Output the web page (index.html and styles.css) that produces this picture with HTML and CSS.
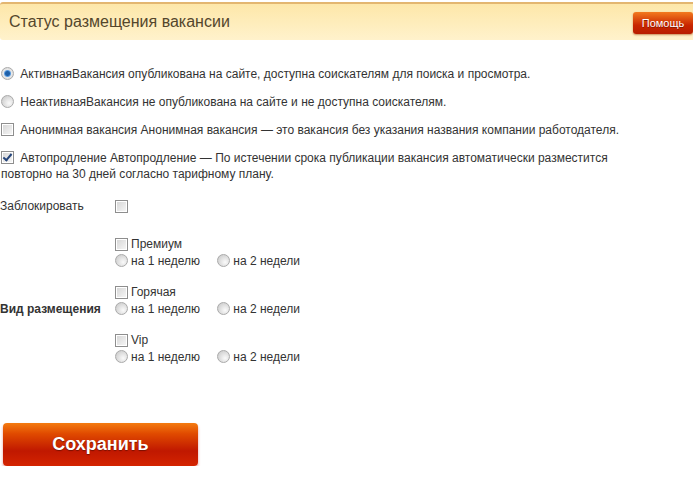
FILE: index.html
```html
<!DOCTYPE html>
<html lang="ru">
<head>
  <meta charset="UTF-8" />
  <title>Статус размещения вакансии</title>
  <link rel="stylesheet" href="styles.css">
</head>
<body>
  <div class="panel-head">
    <h2>Статус размещения вакансии</h2>
    <button class="help">Помощь</button>
  </div>

  <div class="options">
    <label class="opt"><input type="radio" name="status" checked /> АктивнаяВакансия опубликована на сайте, доступна соискателям для поиска и просмотра.</label>
    <label class="opt"><input type="radio" name="status" /> НеактивнаяВакансия не опубликована на сайте и не доступна соискателям.</label>
    <label class="opt"><input type="checkbox" /> Анонимная вакансия Анонимная вакансия — это вакансия без указания названия компании работодателя.</label>
    <label class="opt"><input type="checkbox" checked /> Автопродление Автопродление — По истечении срока публикации вакансия автоматически разместится повторно на 30 дней согласно тарифному плану.</label>
  </div>

  <div class="row">
    <div class="row-label">Заблокировать</div>
    <div class="row-field"><input type="checkbox" /></div>
  </div>

  <div class="row placement">
    <div class="row-label bold">Вид размещения</div>
    <div class="row-field">
      <div class="group">
        <label class="line"><input type="checkbox" />Премиум</label>
        <div class="line">
          <label><input type="radio" name="p1" />на 1 неделю</label>
          <label><input type="radio" name="p1" />на 2 недели</label>
        </div>
      </div>
      <div class="group">
        <label class="line"><input type="checkbox" />Горячая</label>
        <div class="line">
          <label><input type="radio" name="p2" />на 1 неделю</label>
          <label><input type="radio" name="p2" />на 2 недели</label>
        </div>
      </div>
      <div class="group">
        <label class="line"><input type="checkbox" />Vip</label>
        <div class="line">
          <label><input type="radio" name="p3" />на 1 неделю</label>
          <label><input type="radio" name="p3" />на 2 недели</label>
        </div>
      </div>
    </div>
  </div>

  <button class="save">Сохранить</button>
</body>
</html>
```

FILE: styles.css
```css
body {
  margin: 0;
  font-family: "Liberation Sans", Arial, sans-serif;
  font-size: 12px;
  color: #333;
  background: #fff;
}

.panel-head {
  margin-top: 2px;
  height: 36px;
  border-top: 2px solid #e3b670;
  background: linear-gradient(#fde7a9, #fff2cc);
  border-radius: 3px 0 0 3px;
  display: flex;
  align-items: center;
  justify-content: space-between;
  padding-left: 9px;
}

.panel-head h2 {
  margin: 0;
  font-weight: normal;
  font-size: 16px;
  color: #54462c;
}

.help {
  width: 60px;
  height: 22px;
  margin-top: 2px;
  border: 0;
  border-radius: 3px;
  font-family: inherit;
  font-size: 11px;
  color: #fff;
  background: linear-gradient(#f37a1e, #c92600 60%, #b81c00);
  box-shadow: 0 1px 2px #c98c5c;
  text-shadow: 0 1px 0 #8a1a00;
}

input[type=checkbox], input[type=radio] {
  appearance: none;
  -webkit-appearance: none;
  width: 13px;
  height: 13px;
  margin: 0 3px 0 0;
  vertical-align: -2px;
  border: 1px solid #9a9a9a;
  background: linear-gradient(135deg, #d4d4d4, #f8f8f8);
  position: relative;
}

input[type=checkbox] {
  border-color: #8e8e8e;
  box-shadow: inset 0 0 0 1px #fff;
}

input[type=radio] {
  border-radius: 50%;
  border-color: #aaa;
  background: radial-gradient(circle at 65% 65%, #fafafa, #cfcfcf 80%);
}

input[type=radio]:checked {
  background: radial-gradient(circle, #1d5fa8 0 2px, #5a9ce0 3px, #e8e8e8 4px, #cfcfcf);
}

input[type=checkbox]:checked::after {
  content: "";
  position: absolute;
  left: 3px;
  top: 0;
  width: 3px;
  height: 7px;
  border: solid #24447a;
  border-width: 0 2px 2px 0;
  transform: rotate(40deg);
}

.options {
  margin-top: 26px;
  padding-left: 1px;
  max-width: 640px;
}

.opt {
  display: block;
  line-height: 16px;
  margin-bottom: 12px;
}

.row {
  display: flex;
  margin-top: 16px;
  line-height: 17px;
}

.row-label {
  width: 115px;
  flex: none;
}

.row-field input[type=checkbox] {
  vertical-align: -3px;
}

.placement {
  margin-top: 21px;
}

.bold {
  font-weight: bold;
  margin-top: 65px;
}

.group {
  margin-bottom: 14px;
}

.group:last-child {
  margin-bottom: 0;
}

.line {
  display: block;
  height: 17px;
}

.line label {
  margin-right: 14px;
}

.save {
  display: block;
  margin: 57px 0 0 3px;
  width: 195px;
  height: 43px;
  border: 0;
  border-radius: 4px;
  font-family: inherit;
  font-size: 18px;
  font-weight: bold;
  color: #fff;
  background: linear-gradient(#f47b10, #e04a00 25%, #c01800 65%, #d42400);
  box-shadow: 0 2px 3px #e6a0a0;
  text-shadow: 0 1px 1px #7a1000;
}
```
